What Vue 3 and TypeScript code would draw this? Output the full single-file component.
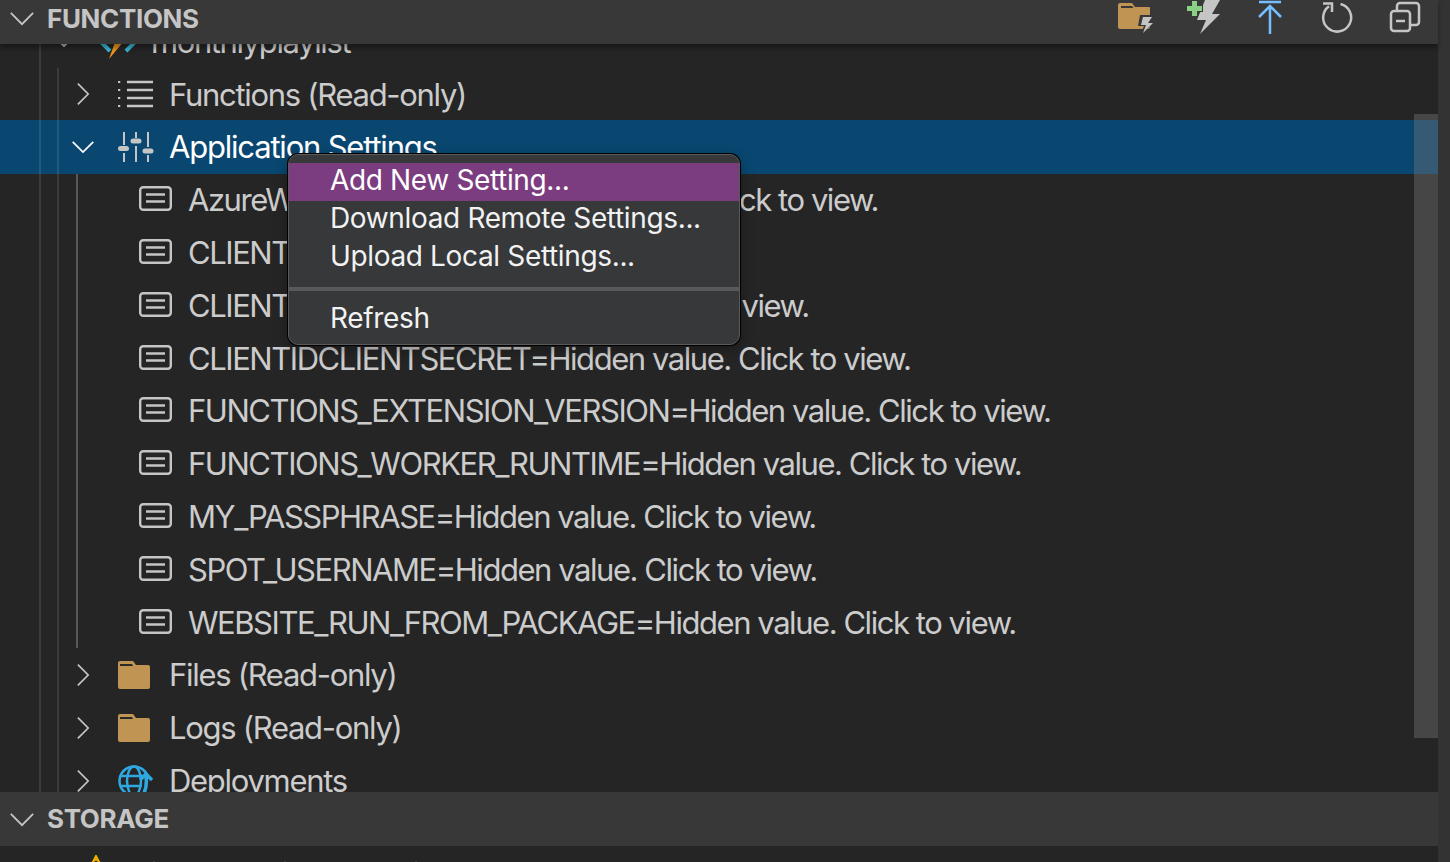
<script setup lang="ts">
interface Setting {
  label: string
}

const settings: Setting[] = [
  { label: 'AzureWebJobsStorage=Hidden value. Click to view.' },
  { label: 'CLIENTID=Hidden value. Click to view.' },
  { label: 'CLIENTIDSECRET=Hidden value. Click to view.' },
  { label: 'CLIENTIDCLIENTSECRET=Hidden value. Click to view.' },
  { label: 'FUNCTIONS_EXTENSION_VERSION=Hidden value. Click to view.' },
  { label: 'FUNCTIONS_WORKER_RUNTIME=Hidden value. Click to view.' },
  { label: 'MY_PASSPHRASE=Hidden value. Click to view.' },
  { label: 'SPOT_USERNAME=Hidden value. Click to view.' },
  { label: 'WEBSITE_RUN_FROM_PACKAGE=Hidden value. Click to view.' },
]

const menuTop = ['Add New Setting...', 'Download Remote Settings...', 'Upload Local Settings...']
</script>

<template>
  <div class="sidebar">
    <div class="main">
      <header class="section-head section-head--top">
        <svg class="head-chevron" viewBox="0 0 28 16"><path d="M2 2l12 12L26 2" /></svg>
        <span class="section-title">FUNCTIONS</span>
        <div class="head-actions">
          <!-- create project -->
          <svg class="action" width="36" height="36" viewBox="0 0 36 36">
            <path fill="#c09553" d="M0 5a2 2 0 0 1 2-2h12l3 4h14a1 1 0 0 1 1 1v19a2 2 0 0 1-2 2H2a2 2 0 0 1-2-2z" />
            <path fill="#383838" d="M3 6h11l1.500 2H3z" />
            <path fill="#383838" d="M22 15h14l-4 7h5L22 36l4-10h-6z" />
            <path fill="#c5c5c5" d="M25 17h9l-4 6h5L25 33l3-8h-5z" />
          </svg>
          <!-- create function -->
          <svg class="action" width="36" height="36" viewBox="0 0 36 36">
            <path fill="#c5c5c5" d="M18 0h15l-8 14h8L13 34l6-14H10z" />
            <path fill="#89d185" stroke="#383838" stroke-width="2" paint-order="stroke" d="M5 1h5v5h5v5h-5v5H5v-5H0V6h5z" />
          </svg>
          <!-- deploy -->
          <svg class="action" width="36" height="36" viewBox="0 0 36 36" fill="none" stroke="#75beff" stroke-width="2.500">
            <path d="M7 2h22M18 34V6M7 17L18 6l11 11" />
          </svg>
          <!-- refresh -->
          <svg class="action" width="36" height="36" viewBox="0 0 36 36" fill="none" stroke="#c5c5c5" stroke-width="2.500">
            <path d="M21.500 4A14 14 0 1 1 10 6.200" />
            <path d="M4 3.500h9V12" />
          </svg>
          <!-- collapse all -->
          <svg class="action" width="36" height="36" viewBox="0 0 36 36" fill="none" stroke="#c5c5c5" stroke-width="2.500">
            <rect x="3" y="11" width="19" height="20" rx="3" />
            <path d="M8 21h9M9 10V6a3 3 0 0 1 3-3h16a3 3 0 0 1 3 3v16a3 3 0 0 1-3 3h-5" />
          </svg>
        </div>
      </header>

      <div class="tree">
        <div class="tree-scroll">
          <div class="row row--l1">
            <svg class="chevron" viewBox="0 0 28 16"><path d="M2 2l12 12L26 2" /></svg>
            <svg class="icon" viewBox="0 0 36 36">
              <path d="M11 11L2 20l8 8" fill="none" stroke="#39b7d6" stroke-width="4" />
              <path d="M25 11l9 9-8 8" fill="none" stroke="#39b7d6" stroke-width="4" />
              <path d="M24 18L9 36l5-14 2-10h8z" fill="#f0941d" />
            </svg>
            <span>monthlyplaylist</span>
          </div>

          <div class="row row--l2">
            <svg class="chevron chevron--right" viewBox="0 0 16 28"><path d="M2 2l12 12L2 26" /></svg>
            <svg class="icon" viewBox="0 0 36 36" fill="none" stroke="#c5c5c5" stroke-width="2.500">
              <path d="M9 6h26M9 14h26M9 22h26M9 30h26" />
              <path d="M1 5v2M1 13v2M1 21v2M1 29v2" />
            </svg>
            <span>Functions (Read-only)</span>
          </div>

          <div class="row row--l2 row--selected">
            <svg class="chevron chevron--open" viewBox="0 0 28 16"><path d="M2 2l12 12L26 2" /></svg>
            <svg class="icon" viewBox="0 0 36 36">
              <path stroke="#c5c5c5" stroke-width="2" d="M6 3v13M6 24v9M18 3v6M18 17v16M30 3v15M30 26v7" />
              <rect x="0" y="17" width="11" height="5" rx="2.500" fill="#c5c5c5" />
              <rect x="12.500" y="9.500" width="11" height="5" rx="2.500" fill="#c5c5c5" />
              <rect x="24.500" y="19.500" width="11" height="5" rx="2.500" fill="#c5c5c5" />
            </svg>
            <span class="selected-label">Application Settings</span>
          </div>

          <div v-for="item in settings" :key="item.label" class="row row--l3">
            <svg class="icon icon--setting" viewBox="0 0 33 25" fill="none" stroke="#c5c5c5" stroke-width="2.400">
              <rect x="1.200" y="1.200" width="30.600" height="22.600" rx="3" />
              <path d="M7 8.500h19M7 15.500h19" />
            </svg>
            <span>{{ item.label }}</span>
          </div>

          <div class="row row--l2">
            <svg class="chevron chevron--right" viewBox="0 0 16 28"><path d="M2 2l12 12L2 26" /></svg>
            <svg class="icon" viewBox="2 0 36 30">
              <path fill="#c09553" d="M2 3a2 2 0 0 1 2-2h13l3 4h12a2 2 0 0 1 2 2v20a2 2 0 0 1-2 2H4a2 2 0 0 1-2-2z" />
              <path fill="#2a2a2a" d="M4 4h12l1 2H4z" />
            </svg>
            <span>Files (Read-only)</span>
          </div>

          <div class="row row--l2">
            <svg class="chevron chevron--right" viewBox="0 0 16 28"><path d="M2 2l12 12L2 26" /></svg>
            <svg class="icon" viewBox="2 0 36 30">
              <path fill="#c09553" d="M2 3a2 2 0 0 1 2-2h13l3 4h12a2 2 0 0 1 2 2v20a2 2 0 0 1-2 2H4a2 2 0 0 1-2-2z" />
              <path fill="#2a2a2a" d="M4 4h12l1 2H4z" />
            </svg>
            <span>Logs (Read-only)</span>
          </div>

          <div class="row row--l2">
            <svg class="chevron chevron--right" viewBox="0 0 16 28"><path d="M2 2l12 12L2 26" /></svg>
            <svg class="icon" viewBox="0 0 36 36" fill="none" stroke="#2fa8e0" stroke-width="2.500">
              <circle cx="16" cy="18" r="14.500" />
              <ellipse cx="16" cy="18" rx="7" ry="14.500" />
              <path d="M2 13h28M2 23h28" />
              <path d="M25 32c3-5 4-11 3-19" stroke="#252526" stroke-width="8" />
              <path d="M25 32c3-5 4-11 3-19M22 17l6-6 6 6" stroke-width="3.500" />
            </svg>
            <span>Deployments</span>
          </div>
        </div>

        <!-- indent guides -->
        <i class="guide guide--a"></i>
        <i class="guide guide--b"></i>
        <i class="guide guide--c"></i>

        <div class="scroll-thumb"></div>

        <div class="menu">
          <div class="menu-group">
            <div
              v-for="(label, i) in menuTop"
              :key="label"
              class="menu-item"
              :class="{ 'menu-item--active': i === 0 }"
            >{{ label }}</div>
          </div>
          <div class="menu-sep"></div>
          <div class="menu-item">Refresh</div>
        </div>
      </div>

      <header class="section-head section-head--storage">
        <svg class="head-chevron" viewBox="0 0 28 16"><path d="M2 2l12 12L26 2" /></svg>
        <span class="section-title">STORAGE</span>
      </header>

      <div class="storage">
        <svg class="warn" width="26" height="26" viewBox="0 0 30 30">
          <path fill="#e8ab00" stroke="#e8ab00" stroke-width="2" stroke-linejoin="round" d="M15 2l13 25H2z" />
          <path fill="#222" d="M13.500 8h3v10h-3z" />
        </svg>
        <span>Visual Studio Enterprise</span>
      </div>
    </div>
    <div class="edge"></div>
  </div>
</template>

<style>
body {
  background: #252526;
  overflow: hidden;
}
</style>

<style scoped>
.sidebar {
  display: flex;
  width: 1450px;
  height: 862px;
  overflow: hidden;
  font-family: Inter, "Liberation Sans", sans-serif;
  background: #252526;
}
.main {
  flex: 1;
  min-width: 0;
  display: flex;
  flex-direction: column;
}
.edge {
  width: 12px;
  background: #333333;
}

.section-head {
  display: flex;
  align-items: center;
  height: 54px;
  flex: none;
  background: #383838;
  color: #c5c5c5;
  padding-left: 9px;
  position: relative;
  z-index: 3;
}
.section-head--top {
  height: 44px;
  box-shadow: 0 4px 5px rgba(0, 0, 0, 0.35);
  align-items: flex-start;
}
.section-head--top .head-chevron { margin-top: 11px; }
.section-head--top .section-title { margin-top: 2px; line-height: 34px; }
.section-head--storage .section-title { margin-top: -2px; }
.head-chevron {
  width: 26px;
  height: 15px;
  fill: none;
  stroke: #c5c5c5;
  stroke-width: 2;
  flex: none;
}
.section-title {
  margin-left: 12px;
  font-size: 26px;
  font-weight: 700;
  letter-spacing: -0.35px;
}
.head-actions {
  margin-left: auto;
  display: flex;
  gap: 31px;
  margin-right: 14px;
}
.action { display: block; }
.action:nth-child(1) { margin-right: 2px; }
.action:nth-child(2) { margin-right: -2px; }
.action:nth-child(4) { margin-right: 2px; }

.tree {
  flex: 1;
  min-height: 0;
  position: relative;
  overflow: hidden;
  z-index: 1;
}
.tree-scroll { margin-top: -29px; }

.row {
  display: flex;
  align-items: center;
  height: 52.8px;
  color: #cccccc;
  font-size: 31px;
  letter-spacing: -1.2px;
  white-space: nowrap;
}
.row--l1 {
  padding-left: 52px;
  letter-spacing: -1.4px;
}
.row--l2 {
  padding-left: 75px;
  letter-spacing: -1.3px;
}
.row--l3 {
  padding-left: 139px;
  letter-spacing: -1.45px;
}
.row--selected {
  background: #094771;
  color: #ffffff;
  height: 54px;
  margin-top: -0.800px;
  margin-bottom: -0.400px;
  letter-spacing: -1.2px;
}

.chevron {
  flex: none;
  width: 24px;
  height: 14px;
  fill: none;
  stroke: #c5c5c5;
  stroke-width: 2;
  margin-right: 20px;
}
.row--l1 .chevron { margin-right: 24px; }
.chevron--right {
  width: 14px;
  height: 24px;
  margin-left: 1px;
  margin-right: 28px;
}
.chevron--open {
  margin-left: -4px;
  margin-right: 23px;
  stroke: #ffffff;
}
.icon {
  flex: none;
  width: 36px;
  height: 36px;
  margin-right: 15px;
}
.icon--setting {
  width: 33px;
  height: 25px;
  margin-right: 16px;
  margin-bottom: 2px;
}

.guide {
  position: absolute;
  width: 2px;
  background: rgba(255, 255, 255, 0.1);
}
.guide--a { left: 39px; top: 0; bottom: 0; }
.guide--b { left: 57px; top: 24px; bottom: 0; }
.guide--c { left: 76px; top: 130px; height: 474px; background: #585858; }

.scroll-thumb {
  position: absolute;
  left: 1414px;
  width: 24px;
  top: 70px;
  height: 624px;
  background: rgba(121, 121, 121, 0.4);
}

.menu {
  position: absolute;
  left: 288px;
  top: 110px;
  width: 452px;
  height: 191px;
  box-sizing: border-box;
  padding-top: 8px;
  background: #36383a;
  border-radius: 10px;
  border: 1px solid #5a5a5a;
  box-shadow: 0 0 0 1px #000000, 0 4px 14px rgba(0, 0, 0, 0.35);
  color: #f2f2f2;
  overflow: hidden;
  z-index: 4;
}
.menu-item {
  height: 38px;
  line-height: 35px;
  padding-left: 41px;
  font-size: 28px;
  letter-spacing: -0.35px;
  white-space: nowrap;
}
.menu-item--active {
  background: #7b3c80;
  color: #ffffff;
}
.menu-sep {
  height: 4px;
  margin: 10px 0 10px;
  background: #58595b;
}

.storage {
  flex: none;
  height: 16px;
  overflow: hidden;
  display: flex;
  align-items: flex-start;
  padding-left: 83px;
  gap: 21px;
  color: #cccccc;
  font-size: 31px;
  line-height: 36px;
  letter-spacing: -1.2px;
  white-space: nowrap;
}
.warn { flex: none; margin-top: 8px; }
.storage span { margin-top: 10px; }
</style>
